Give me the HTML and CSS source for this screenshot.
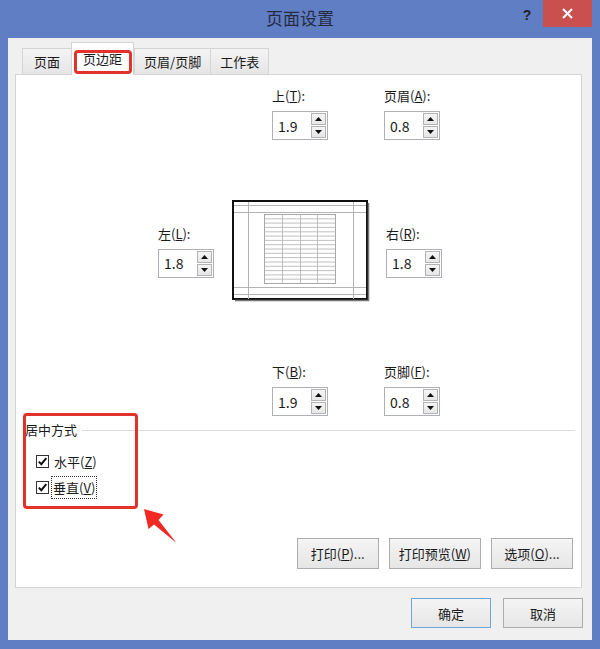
FILE: index.html
```html
<!DOCTYPE html>
<html>
<head>
<meta charset="utf-8">
<link rel="stylesheet" href="styles.css">
</head>
<body>
<div class="window">
  <div class="titlebar">
    <div class="title">页面设置</div>
    <div class="controls">
      <div class="help">?</div>
      <div class="close">
        <svg width="11" height="11" viewBox="0 0 11 11"><path d="M1 1 L10 10 M10 1 L1 10" stroke="#fff" stroke-width="2"/></svg>
      </div>
    </div>
  </div>
  <div class="client">
    <div class="tabs">
      <div class="tab">页面</div>
      <div class="tab active">页边距<span class="mark-tab"></span></div>
      <div class="tab narrow">页眉/页脚</div>
      <div class="tab narrow">工作表</div>
    </div>
    <div class="panel">
      <div class="row row-top">
        <div class="field">
          <div class="lbl">上(<u>T</u>):</div>
          <div class="spin"><span>1.9</span><div class="spin-btns"><div class="sb"><svg width="7" height="4" viewBox="0 0 7 4"><polygon points="3.5,0 7,4 0,4" fill="#111"/></svg></div><div class="sb"><svg width="7" height="4" viewBox="0 0 7 4"><polygon points="0,0 7,0 3.5,4" fill="#111"/></svg></div></div></div>
        </div>
        <div class="field">
          <div class="lbl">页眉(<u>A</u>):</div>
          <div class="spin"><span>0.8</span><div class="spin-btns"><div class="sb"><svg width="7" height="4" viewBox="0 0 7 4"><polygon points="3.5,0 7,4 0,4" fill="#111"/></svg></div><div class="sb"><svg width="7" height="4" viewBox="0 0 7 4"><polygon points="0,0 7,0 3.5,4" fill="#111"/></svg></div></div></div>
        </div>
      </div>
      <div class="row row-mid">
        <div class="field">
          <div class="lbl">左(<u>L</u>):</div>
          <div class="spin"><span>1.8</span><div class="spin-btns"><div class="sb"><svg width="7" height="4" viewBox="0 0 7 4"><polygon points="3.5,0 7,4 0,4" fill="#111"/></svg></div><div class="sb"><svg width="7" height="4" viewBox="0 0 7 4"><polygon points="0,0 7,0 3.5,4" fill="#111"/></svg></div></div></div>
        </div>
        <svg class="preview" width="138" height="102" viewBox="0 0 138 102">
          <rect x="1" y="1" width="134" height="98" fill="#fff" stroke="#111" stroke-width="2"/>
          <path d="M136.5 3 V101 M3 100.5 H137" stroke="#777" stroke-width="1.5" fill="none"/>
          <path d="M16.5 2 V99 M121.5 2 V99 M2 5.5 H134 M2 12.5 H134 M2 87.5 H134 M2 94.5 H134" stroke="#b4b4b4" stroke-width="1" fill="none"/>
          <rect x="32.5" y="14.5" width="71" height="69" fill="#fff" stroke="#a8a8a8" stroke-width="1"/>
          <path d="M50.5 14.5 V83.5 M68.5 14.5 V83.5 M85.5 14.5 V83.5 M32.5 18.8 H103.5 M32.5 23.1 H103.5 M32.5 27.4 H103.5 M32.5 31.8 H103.5 M32.5 36.1 H103.5 M32.5 40.4 H103.5 M32.5 44.7 H103.5 M32.5 49 H103.5 M32.5 53.3 H103.5 M32.5 57.6 H103.5 M32.5 62 H103.5 M32.5 66.3 H103.5 M32.5 70.6 H103.5 M32.5 74.9 H103.5 M32.5 79.2 H103.5" stroke="#b0b0b0" stroke-width="0.8" fill="none"/>
        </svg>
        <div class="field field-right">
          <div class="lbl">右(<u>R</u>):</div>
          <div class="spin"><span>1.8</span><div class="spin-btns"><div class="sb"><svg width="7" height="4" viewBox="0 0 7 4"><polygon points="3.5,0 7,4 0,4" fill="#111"/></svg></div><div class="sb"><svg width="7" height="4" viewBox="0 0 7 4"><polygon points="0,0 7,0 3.5,4" fill="#111"/></svg></div></div></div>
        </div>
      </div>
      <div class="row row-bottom">
        <div class="field">
          <div class="lbl">下(<u>B</u>):</div>
          <div class="spin"><span>1.9</span><div class="spin-btns"><div class="sb"><svg width="7" height="4" viewBox="0 0 7 4"><polygon points="3.5,0 7,4 0,4" fill="#111"/></svg></div><div class="sb"><svg width="7" height="4" viewBox="0 0 7 4"><polygon points="0,0 7,0 3.5,4" fill="#111"/></svg></div></div></div>
        </div>
        <div class="field">
          <div class="lbl">页脚(<u>F</u>):</div>
          <div class="spin"><span>0.8</span><div class="spin-btns"><div class="sb"><svg width="7" height="4" viewBox="0 0 7 4"><polygon points="3.5,0 7,4 0,4" fill="#111"/></svg></div><div class="sb"><svg width="7" height="4" viewBox="0 0 7 4"><polygon points="0,0 7,0 3.5,4" fill="#111"/></svg></div></div></div>
        </div>
      </div>
      <div class="group">
        <div class="group-head"><span>居中方式</span><div class="group-line"></div></div>
        <div class="check-row first">
          <span class="box"><svg width="11" height="11" viewBox="0 0 11 11"><path d="M1.8 5.6 L4.3 8.2 L9.3 2.2" stroke="#111" stroke-width="2" fill="none"/></svg></span>
          <span class="ctext">水平(<u>Z</u>)</span>
        </div>
        <div class="check-row">
          <span class="box"><svg width="11" height="11" viewBox="0 0 11 11"><path d="M1.8 5.6 L4.3 8.2 L9.3 2.2" stroke="#111" stroke-width="2" fill="none"/></svg></span>
          <span class="ctext focus">垂直(<u>V</u>)</span>
        </div>
        <div class="mark-group"></div>
      </div>
      <div class="actions">
        <div class="btn">打印(<u>P</u>)...</div>
        <div class="btn">打印预览(<u>W</u>)</div>
        <div class="btn">选项(<u>O</u>)...</div>
      </div>
    </div>
    <div class="footer">
      <div class="btn fbtn default">确定</div>
      <div class="btn fbtn">取消</div>
    </div>
  </div>
</div>
<svg class="arrow" width="600" height="649" viewBox="0 0 600 649">
  <polygon points="144,509 163.5,514.5 158.5,520 176.5,543 154,524.5 148.5,529" fill="#f02a22"/>
</svg>
</body>
</html>
```

FILE: styles.css
```css
body {
  margin: 0;
  font-family: "Noto Sans CJK SC", "Microsoft YaHei", sans-serif;
  font-size: 13px;
  color: #1a1a1a;
}

.window {
  width: 600px;
  height: 649px;
  box-sizing: border-box;
  background: #5f7ec4;
  padding: 0 8px 9px;
  display: flex;
  flex-direction: column;
}

.titlebar {
  height: 38px;
  display: grid;
  grid-template-columns: 1fr auto 1fr;
}

.title {
  grid-column: 2;
  line-height: 36px;
  font-size: 17px;
  color: #272b42;
}

.controls {
  grid-column: 3;
  justify-self: end;
  display: flex;
  align-items: flex-start;
}

.help {
  width: 26px;
  height: 27px;
  line-height: 30px;
  text-align: center;
  font-family: "Liberation Sans", sans-serif;
  font-size: 14px;
  font-weight: bold;
  color: #222;
  margin-right: 3px;
}

.close {
  width: 49px;
  height: 27px;
  background: #c9504e;
  display: flex;
  align-items: center;
  justify-content: center;
}

.client {
  flex: 1;
  background: #f0f0f0;
  display: flex;
  flex-direction: column;
}

.tabs {
  height: 36px;
  display: flex;
  align-items: flex-end;
  padding-left: 14px;
}

.tab {
  height: 25px;
  line-height: 26px;
  padding: 0 11px;
  border: 1px solid #d4d4d4;
  border-bottom: none;
  background: linear-gradient(#f4f4f4, #e5e5e5);
  margin-right: -1px;
  white-space: nowrap;
}

.tab.narrow {
  padding: 0 9px;
}

.tab.active {
  position: relative;
  z-index: 1;
  height: 32px;
  line-height: 31px;
  background: #fff;
  margin: 0 0 -1px 0;
}

.mark-tab {
  position: absolute;
  left: 2px;
  right: 1px;
  top: 7px;
  bottom: 1px;
  border: 3px solid #e2322c;
  border-radius: 4px;
}

.panel {
  height: 514px;
  box-sizing: border-box;
  margin: 0 10px 0 7px;
  background: #fff;
  border: 1px solid #d4d4d4;
  display: flex;
  flex-direction: column;
}

.row {
  display: flex;
}

.row-top {
  margin-top: 12px;
  padding-left: 256px;
  gap: 56px;
}

.row-mid {
  margin-top: 60px;
  padding-left: 142px;
  align-items: center;
}

.row-bottom {
  margin-top: 61px;
  padding-left: 256px;
  gap: 56px;
}

.field {
  width: 56px;
}

.lbl {
  line-height: 18px;
  white-space: nowrap;
}

.spin {
  margin-top: 6px;
  height: 29px;
  box-sizing: border-box;
  border: 1px solid #adb0b6;
  display: flex;
  align-items: center;
  justify-content: space-between;
  padding-left: 5px;
  font-size: 14px;
  background: #fff;
}

.spin-btns {
  display: flex;
  flex-direction: column;
  gap: 1px;
  margin-right: 1px;
}

.sb {
  width: 13px;
  height: 10px;
  border: 1px solid #b3b3b3;
  background: linear-gradient(#f5f5f5, #e6e6e6);
  display: flex;
  align-items: center;
  justify-content: center;
}

.preview {
  display: block;
  margin-left: 18px;
}

.field-right {
  margin-left: 16px;
}

.group {
  position: relative;
  margin: 5px 6px 0 9px;
}

.group-head {
  display: flex;
  align-items: center;
  line-height: 18px;
}

.group-line {
  flex: 1;
  height: 1px;
  background: #dcdcdc;
  margin-left: 5px;
}

.check-row {
  display: flex;
  align-items: center;
  height: 20px;
  padding-left: 11px;
  margin-top: 6px;
}

.check-row.first {
  margin-top: 12px;
}

.box {
  width: 13px;
  height: 13px;
  box-sizing: border-box;
  border: 1px solid #333;
  background: #fff;
  display: flex;
  align-items: center;
  justify-content: center;
  margin-right: 5px;
}

.focus {
  border: 1px dotted #333;
  padding: 0 1px;
  line-height: 21px;
  margin-left: -3px;
}

.mark-group {
  position: absolute;
  left: -2px;
  top: -8px;
  width: 115px;
  height: 96px;
  box-sizing: border-box;
  border: 3px solid #e2322c;
  border-radius: 4px;
}

.actions {
  margin-top: auto;
  margin-bottom: 18px;
  display: flex;
  justify-content: flex-end;
  padding-right: 8px;
  gap: 10px;
}

.btn {
  height: 31px;
  box-sizing: border-box;
  min-width: 82px;
  padding: 0 9px;
  border: 1px solid #adadad;
  background: linear-gradient(#f4f4f4, #e6e6e6);
  display: flex;
  align-items: center;
  justify-content: center;
  white-space: nowrap;
}

.footer {
  display: flex;
  justify-content: flex-end;
  gap: 12px;
  padding: 10px 9px 0 0;
}

.fbtn {
  height: 30px;
  min-width: 80px;
}

.fbtn.default {
  border-color: #6fa5d8;
}

.arrow {
  position: absolute;
  left: 0;
  top: 0;
  pointer-events: none;
}
```
